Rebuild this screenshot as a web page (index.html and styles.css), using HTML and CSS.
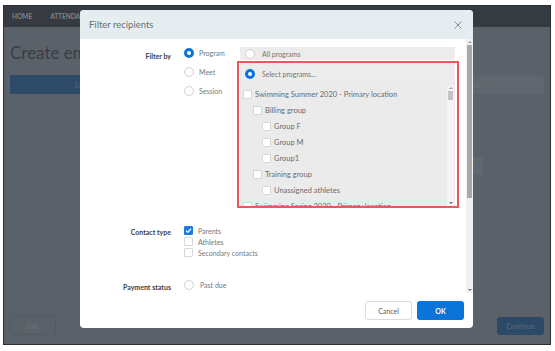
FILE: index.html
```html
<!DOCTYPE html>
<html lang="en">
<head>
    <meta charset="UTF-8">
    <meta name="viewport" content="width=device-width, initial-scale=1.0">
    <title>Filter recipients</title>
    <link rel="stylesheet" href="styles.css">
</head>
<body>
    <div class="app">
        <div class="topbar">
            <span class="nav-item">HOME</span>
            <span class="nav-item">ATTENDANCE</span>
            <span class="nav-item">MESSAGES</span>
        </div>

        <div class="main">
            <h1>Create email</h1>
            <div class="tabs">
                <div class="tab active">Email recipients</div>
                <div class="tab">Compose message</div>
                <div class="tab">Review and send</div>
            </div>
            <div class="select-box"><span class="caret">&#9662;</span></div>
        </div>

        <div class="page-footer">
            <button class="btn-exit">Exit</button>
            <button class="btn-continue">Continue</button>
        </div>

        <!-- modal over the page -->
        <div class="modal">
            <div class="modal-header">
                <span class="modal-title">Filter recipients</span>
                <svg class="close" width="8" height="8" viewBox="0 0 8 8">
                    <path d="M0.5 0.5 L7.5 7.5 M7.5 0.5 L0.5 7.5" stroke="#8a8f93" stroke-width="1" fill="none"/>
                </svg>
            </div>

            <div class="modal-body">
                <div class="form">
                    <div class="field">
                        <div class="field-label">Filter by</div>
                        <div class="filter-controls">
                            <div class="options">
                                <div class="option"><span class="radio on"></span>Program</div>
                                <div class="option"><span class="radio"></span>Meet</div>
                                <div class="option"><span class="radio"></span>Session</div>
                            </div>
                            <div class="panel">
                                <div class="all-row"><span class="radio"></span>All programs</div>
                                <div class="highlight">
                                    <div class="select-row"><span class="radio on"></span>Select programs...</div>
                                    <div class="list">
                                        <div class="list-items">
                                            <div class="item"><span class="check"></span>Swimming Summer 2020 - Primary location</div>
                                            <div class="item lvl1"><span class="check"></span>Billing group</div>
                                            <div class="item lvl2"><span class="check"></span>Group F</div>
                                            <div class="item lvl2"><span class="check"></span>Group M</div>
                                            <div class="item lvl2"><span class="check"></span>Group1</div>
                                            <div class="item lvl1"><span class="check"></span>Training group</div>
                                            <div class="item lvl2"><span class="check"></span>Unassigned athletes</div>
                                            <div class="item"><span class="check"></span>Swimming Spring 2020 - Primary location</div>
                                        </div>
                                        <div class="scrollbar small">
                                            <span class="arrow up"></span>
                                            <span class="thumb"></span>
                                            <span class="spacer"></span>
                                            <span class="arrow down"></span>
                                        </div>
                                    </div>
                                </div>
                            </div>
                        </div>
                    </div>

                    <div class="field contact">
                        <div class="field-label">Contact type</div>
                        <div class="checks">
                            <div class="check-row">
                                <span class="check on">
                                    <svg width="9" height="9" viewBox="0 0 9 9"><path d="M2 4.6 L3.8 6.4 L7 2.8" stroke="#fff" stroke-width="1.3" fill="none"/></svg>
                                </span>Parents
                            </div>
                            <div class="check-row"><span class="check"></span>Athletes</div>
                            <div class="check-row"><span class="check"></span>Secondary contacts</div>
                        </div>
                    </div>

                    <div class="field payment">
                        <div class="field-label">Payment status</div>
                        <div class="option wide"><span class="radio"></span>Past due</div>
                    </div>
                </div>

                <div class="scrollbar big">
                    <span class="arrow up"></span>
                    <span class="thumb"></span>
                    <span class="spacer"></span>
                    <span class="arrow down"></span>
                </div>
            </div>

            <div class="modal-footer">
                <button class="btn-cancel">Cancel</button>
                <button class="btn-ok">OK</button>
            </div>
        </div>
    </div>
</body>
</html>
```

FILE: styles.css
```css
body {
    margin: 0;
    background: #fff;
    font-family: Lato, "Liberation Sans", sans-serif;
}
.app {
    position: relative;
    margin: 5px 0 0 3px;
    width: 548px;
    height: 340px;
    box-sizing: border-box;
    border: 1px solid #2b2e33;
    background: #5b6168;
    display: flex;
    flex-direction: column;
}
.topbar {
    height: 21px;
    background: #363b41;
    display: flex;
    align-items: center;
    gap: 18px;
    padding-left: 8px;
}
.nav-item {
    font-size: 6.5px;
    font-weight: bold;
    color: #7d848b;
}
.main {
    flex: 1;
    padding: 0 6px;
}
.main h1 {
    margin: 16px 0 0;
    font-size: 17px;
    line-height: 20px;
    font-weight: normal;
    color: #393e45;
}
.tabs {
    display: flex;
    margin-top: 12px;
    height: 19px;
}
.tab {
    flex: 1;
    display: flex;
    align-items: center;
    justify-content: center;
    font-size: 7px;
    color: #6c7278;
    background: #60666d;
    border: 1px solid #5f656c;
}
.tab.active {
    background: #2d4b69;
    border-color: #2d4b69;
    color: #4d6b88;
}
.select-box {
    margin: 63px 0 0 370px;
    width: 103px;
    height: 18px;
    box-sizing: border-box;
    background: #61676e;
    display: flex;
    align-items: center;
    justify-content: flex-end;
    padding-right: 3px;
}
.caret {
    font-size: 6px;
    color: #3e6a93;
}
.page-footer {
    display: flex;
    justify-content: space-between;
    align-items: flex-end;
    padding: 0 6px 9px 5px;
}
.btn-exit, .btn-continue {
    width: 47px;
    height: 19px;
    border-radius: 3px;
    font-family: inherit;
    font-size: 7px;
    padding: 0;
}
.btn-exit {
    background: transparent;
    border: 1px solid #545a61;
    color: #70767c;
}
.btn-continue {
    height: 18px;
    background: #2c4a68;
    border: none;
    color: #4f6d8a;
}

/* modal */
.modal {
    position: absolute;
    left: 76px;
    top: 4px;
    width: 393px;
    height: 318px;
    background: #fff;
    border-radius: 4px;
    overflow: hidden;
    display: flex;
    flex-direction: column;
}
.modal-header {
    height: 29px;
    flex: none;
    background: #e5edf0;
    display: flex;
    align-items: center;
    justify-content: space-between;
    padding: 0 11px 0 9px;
}
.modal-title {
    font-size: 9.5px;
    color: #6a6e72;
}
.modal-body {
    height: 254px;
    flex: none;
    display: flex;
    overflow: hidden;
}
.form {
    flex: 1;
    padding-top: 8px;
}
.field {
    display: grid;
    grid-template-columns: 91px auto;
    column-gap: 13px;
    align-items: start;
}
.field-label {
    text-align: right;
    font-size: 7px;
    font-weight: bold;
    line-height: 12px;
    padding-top: 3px;
    color: #3d4043;
}
.filter-controls {
    display: flex;
}
.options {
    width: 53px;
    display: flex;
    flex-direction: column;
    gap: 7px;
}
.option {
    height: 12px;
    display: flex;
    align-items: center;
    gap: 5px;
    font-size: 7px;
    color: #777777;
}
.option.wide {
    gap: 6px;
}
.radio {
    flex: none;
    width: 10px;
    height: 10px;
    box-sizing: border-box;
    border-radius: 50%;
    border: 1px solid #cfd2d5;
    background: #fff;
}
.radio.on {
    border: 3px solid #0b74d9;
}
.panel {
    width: 215px;
    margin-left: 3px;
}
.all-row, .select-row {
    display: flex;
    align-items: center;
    gap: 7px;
    padding-left: 5px;
    background: #ececec;
    font-size: 7px;
    color: #757575;
}
.all-row {
    height: 13px;
}
.select-row {
    height: 22px;
}
.highlight {
    margin: 1px -4px 0 -3px;
    border: 2px solid #e8585c;
    padding: 0 2px 0 1px;
}
.list {
    height: 121px;
    display: flex;
    background: #ebebeb;
    overflow: hidden;
    padding-right: 1px;
}
.list-items {
    flex: 1;
    padding-top: 1px;
}
.item {
    height: 16px;
    display: flex;
    align-items: center;
    gap: 3px;
    padding-left: 3px;
    font-size: 7.5px;
    color: #6b6b6b;
    white-space: nowrap;
}
.item.lvl1 {
    padding-left: 13px;
}
.item.lvl2 {
    padding-left: 22px;
}
.check {
    flex: none;
    width: 9px;
    height: 9px;
    box-sizing: border-box;
    border: 1px solid #d5d7d9;
    border-radius: 1px;
    background: #fff;
    display: flex;
}
.check.on {
    background: #1a7ade;
    border-color: #1a7ade;
}
.check.on svg {
    margin: -1px;
}
.contact {
    margin-top: 17px;
}
.contact .field-label {
    padding-top: 1px;
}
.checks {
    display: flex;
    flex-direction: column;
}
.check-row {
    height: 11px;
    display: flex;
    align-items: center;
    gap: 5px;
    font-size: 7px;
    color: #777777;
}
.payment {
    margin-top: 21px;
}
.payment .field-label {
    padding-top: 2px;
}

/* scrollbars */
.scrollbar {
    flex: none;
    width: 7px;
    display: flex;
    flex-direction: column;
    align-items: center;
}
.scrollbar.big {
    background: #f1f1f1;
}
.scrollbar.small {
    background: #f4f4f4;
}
.arrow {
    width: 0;
    height: 0;
    margin: 2px 0;
    border-left: 2px solid transparent;
    border-right: 2px solid transparent;
}
.arrow.up {
    border-bottom: 2px solid #a0a0a0;
}
.arrow.down {
    border-top: 2px solid #707070;
}
.thumb {
    width: 5px;
    background: #a9a9a9;
}
.big .thumb {
    height: 153px;
}
.small .thumb {
    height: 9px;
    background: #c3c3c3;
}
.spacer {
    flex: 1;
}
.modal-footer {
    flex: 1;
    display: flex;
    justify-content: flex-end;
    align-items: center;
    gap: 5px;
    padding-right: 9px;
}
.btn-cancel, .btn-ok {
    width: 47px;
    height: 19px;
    border-radius: 3px;
    font-family: inherit;
    font-size: 7px;
    padding: 0;
}
.btn-cancel {
    background: #fff;
    border: 1px solid #d9dde0;
    color: #5a5e62;
}
.btn-ok {
    background: #0b74d9;
    border: none;
    color: #fff;
    font-weight: bold;
}
```
